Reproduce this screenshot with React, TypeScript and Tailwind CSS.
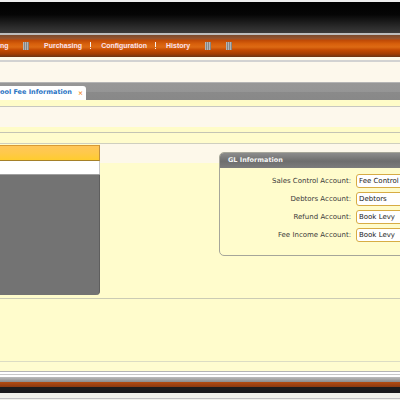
import React from "react";

const menu = ["Purchasing", "Configuration", "History"];

const glRows = [
  { label: "Sales Control Account:", value: "Fee Control" },
  { label: "Debtors Account:", value: "Debtors" },
  { label: "Refund Account:", value: "Book Levy" },
  { label: "Fee Income Account:", value: "Book Levy" },
];

function Grip() {
  return (
    <div className="w-[6px] h-[8px] bg-[repeating-linear-gradient(to_right,#b4b4b4_0px,#b4b4b4_1px,#858585_1px,#858585_2px)]" />
  );
}

function Bang() {
  return (
    <div className="flex flex-col items-center gap-[1px] -mt-[2px]">
      <div className="w-px h-[5px] bg-[#f4f0f0]" />
      <div className="w-px h-px bg-[#f4f0f0]" />
    </div>
  );
}

function MenuBar() {
  return (
    <div className="h-[22px] flex items-center bg-[linear-gradient(to_bottom,#7a4a2c_0px,#9a5630_4px,#bd4806_5px,#d8600c_9px,#dd6a14_12px,#c44a02_15px,#a23c04_19px,#6a3416_22px)] font-['Liberation_Sans',sans-serif] font-bold text-[7px] text-[#fbe2ee]">
      <span className="w-[8px]">ng</span>
      <div className="ml-[15px]">
        <Grip />
      </div>
      <span className="ml-[15px]">{menu[0]}</span>
      <div className="ml-[8px]">
        <Bang />
      </div>
      <span className="ml-[10px]">{menu[1]}</span>
      <div className="ml-[8px]">
        <Bang />
      </div>
      <span className="ml-[10px]">{menu[2]}</span>
      <div className="ml-[15px]">
        <Grip />
      </div>
      <div className="ml-[15px]">
        <Grip />
      </div>
    </div>
  );
}

function TabBar() {
  return (
    <div className="h-[17px] flex items-end bg-[linear-gradient(to_bottom,#979797_0px,#959595_9px,#8a8a8a_9px,#888888_17px)]">
      <div className="w-[86px] h-[14px] bg-white rounded-tr-[3px] flex items-center">
        <span className="font-['DejaVu_Sans',sans-serif] font-bold text-[6.5px] text-[#2a74c4] whitespace-nowrap">
          ool Fee Information
        </span>
        <span className="ml-auto mr-[3px] font-['DejaVu_Sans',sans-serif] font-bold text-[6px] text-[#f28a1c] leading-none">
          ×
        </span>
      </div>
    </div>
  );
}

function LeftPanel() {
  return (
    <div className="w-[100px] flex flex-col">
      <div className="mt-px h-[16px] border-t border-b border-r border-t-[#d89a34] border-b-[#a58028] border-r-[#c09040] bg-[linear-gradient(to_bottom,#ffc65a,#ffc94a_50%,#ffcc2e)]" />
      <div className="h-[13px] bg-white border-r border-[#c8c8c8]" />
      <div className="h-px bg-[#a0a0a0]" />
      <div className="h-[120px] bg-[#737373] border-r border-[#5e5e5e] rounded-br-[4px]" />
    </div>
  );
}

function GLBox() {
  return (
    <div className="ml-[119px] mt-[8px] w-[230px] h-[104px] border border-[#a6a69a] rounded-[5px] overflow-hidden bg-[#fffccc]">
      <div className="h-[15px] flex items-center pl-[8px] bg-[linear-gradient(to_bottom,#8c8c8c,#6e6e6e_55%,#7c7c7c)]">
        <span className="font-['DejaVu_Sans',sans-serif] font-bold text-[6.5px] text-[#f4f4f4]">
          GL Information
        </span>
      </div>
      <div className="pt-[6px] grid grid-cols-[131px_1fr] gap-x-[5px] gap-y-[4px] font-['DejaVu_Sans',sans-serif] text-[7px]">
        {glRows.map((row) => (
          <React.Fragment key={row.label}>
            <div className="h-[14px] flex items-center justify-end text-[#3a3a3a]">
              {row.label}
            </div>
            <div className="h-[14px] w-[80px] flex items-center pl-[2px] bg-white border border-[#d7ac44] rounded-[3px] text-[#222]">
              {row.value}
            </div>
          </React.Fragment>
        ))}
      </div>
    </div>
  );
}

export default function App() {
  return (
    <div className="w-[400px] h-[400px] overflow-hidden flex flex-col bg-[#fffccc]">
      <div className="h-[2px] bg-[#ececec]" />
      <div className="h-[31px] bg-[linear-gradient(to_bottom,#000000,#050505_40%,#2a2a2a_80%,#3a3a3a)]" />
      <div className="h-[2px] bg-[#bdbdbd]" />
      <MenuBar />
      <div className="h-[3px] bg-[#fdf8ea]" />
      <div className="h-[2px] bg-[#d2d2d2]" />
      <div className="h-[20px] bg-[#fdf8ec]" />
      <div className="h-px bg-[#b4b4b4]" />
      <TabBar />
      <div className="h-[6px] bg-[#fffcc8]" />
      <div className="h-px bg-[#c8c8c0]" />
      <div className="h-[20px] bg-[#fdf8ec]" />
      <div className="h-[5px] bg-[#fffcc8]" />
      <div className="h-px bg-[#c4c4b4]" />
      <div className="h-[10px]" />
      <div className="h-px bg-[#cfcfbf]" />
      <div className="h-[154px] flex">
        <LeftPanel />
        <div className="flex-1 overflow-hidden bg-[linear-gradient(to_bottom,#fdf8ea_0px,#fdf8ea_19px,#fffccc_19px)]">
          <GLBox />
        </div>
      </div>
      <div className="h-px bg-[#cbcbb4]" />
      <div className="h-[62px]" />
      <div className="h-px bg-[#dcdcc4]" />
      <div className="h-[9px] bg-[#fffcd0]" />
      <div className="h-px bg-[#b4b4b4]" />
      <div className="h-[2px] bg-white" />
      <div className="h-px bg-[#c8c8c8]" />
      <div className="h-[2px] bg-white" />
      <div className="h-[5px] bg-[linear-gradient(to_bottom,#bcbcbc,#8c8c8c)]" />
      <div className="h-[5px] bg-[linear-gradient(to_bottom,#b44c12,#8a3a10)]" />
      <div className="h-[6px] bg-[#1c1c1c]" />
      <div className="h-[5px] bg-[#f4f4ec]" />
      <div className="h-px bg-[#c4c4c4]" />
      <div className="h-px bg-[#f4f4ec]" />
    </div>
  );
}
